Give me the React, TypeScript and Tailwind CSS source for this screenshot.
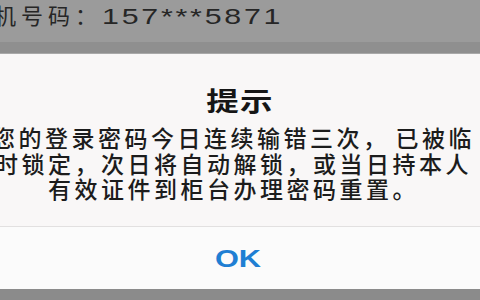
export default function App() {
  return (
    <div
      className="relative w-[480px] h-[300px] overflow-hidden flex flex-col bg-[#8b8b8b]"
      style={{ fontFamily: '"Liberation Sans", "Noto Sans CJK SC", sans-serif' }}
    >
      {/* phone number row behind the alert */}
      <div className="h-[42px] shrink-0 bg-[#9b9b9b] flex items-start">
        <div className="-ml-[6px] mt-[1px] flex items-baseline whitespace-nowrap text-[#262626]">
          <span
            className="text-[22px] leading-[26px] tracking-[5px]"
            style={{ fontFamily: '"Noto Sans CJK SC", sans-serif' }}
          >
            机号码：
          </span>
          <span className="inline-block origin-left scale-x-[1.38] text-[22px] leading-[26px] tracking-[2px]">
            157***5871
          </span>
        </div>
      </div>
      <div className="h-[12px] shrink-0 bg-[#8f8f8f] border-b border-[#a9a9a9]" />

      {/* alert */}
      <div className="h-[235px] shrink-0 flex flex-col bg-[#f9f7f7]">
        <div className="h-[172px] shrink-0 flex flex-col items-center overflow-hidden">
          <div className="mt-[35px] text-[26px] leading-[26px] font-bold text-[#161616] scale-x-[1.25] tracking-[1px]">
            提示
          </div>
          <div
            className="mt-[10px] -ml-[13px] w-[520px] text-center text-[23px] leading-[25.5px] tracking-[3.5px] font-medium text-[#1c1c1c] whitespace-nowrap"
            style={{ fontFamily: '"Noto Sans CJK SC", sans-serif' }}
          >
            <div>您的登录密码今日连续输错三次，<span className="inline-block w-[6px]" />已被临</div>
            <div>时锁定，次日将自动解锁，或当日持本人</div>
            <div>有效证件到柜台办理密码重置。</div>
          </div>
        </div>
        <div className="h-px shrink-0 bg-[#e2e0e0]" />
        <div className="flex-1 flex items-center justify-center bg-[#fbfbfb]">
          <span className="mt-[2px] ml-[-4px] text-[24px] leading-none font-bold text-[#1f7fd3] scale-x-[1.28]">
            OK
          </span>
        </div>
      </div>
    </div>
  );
}
